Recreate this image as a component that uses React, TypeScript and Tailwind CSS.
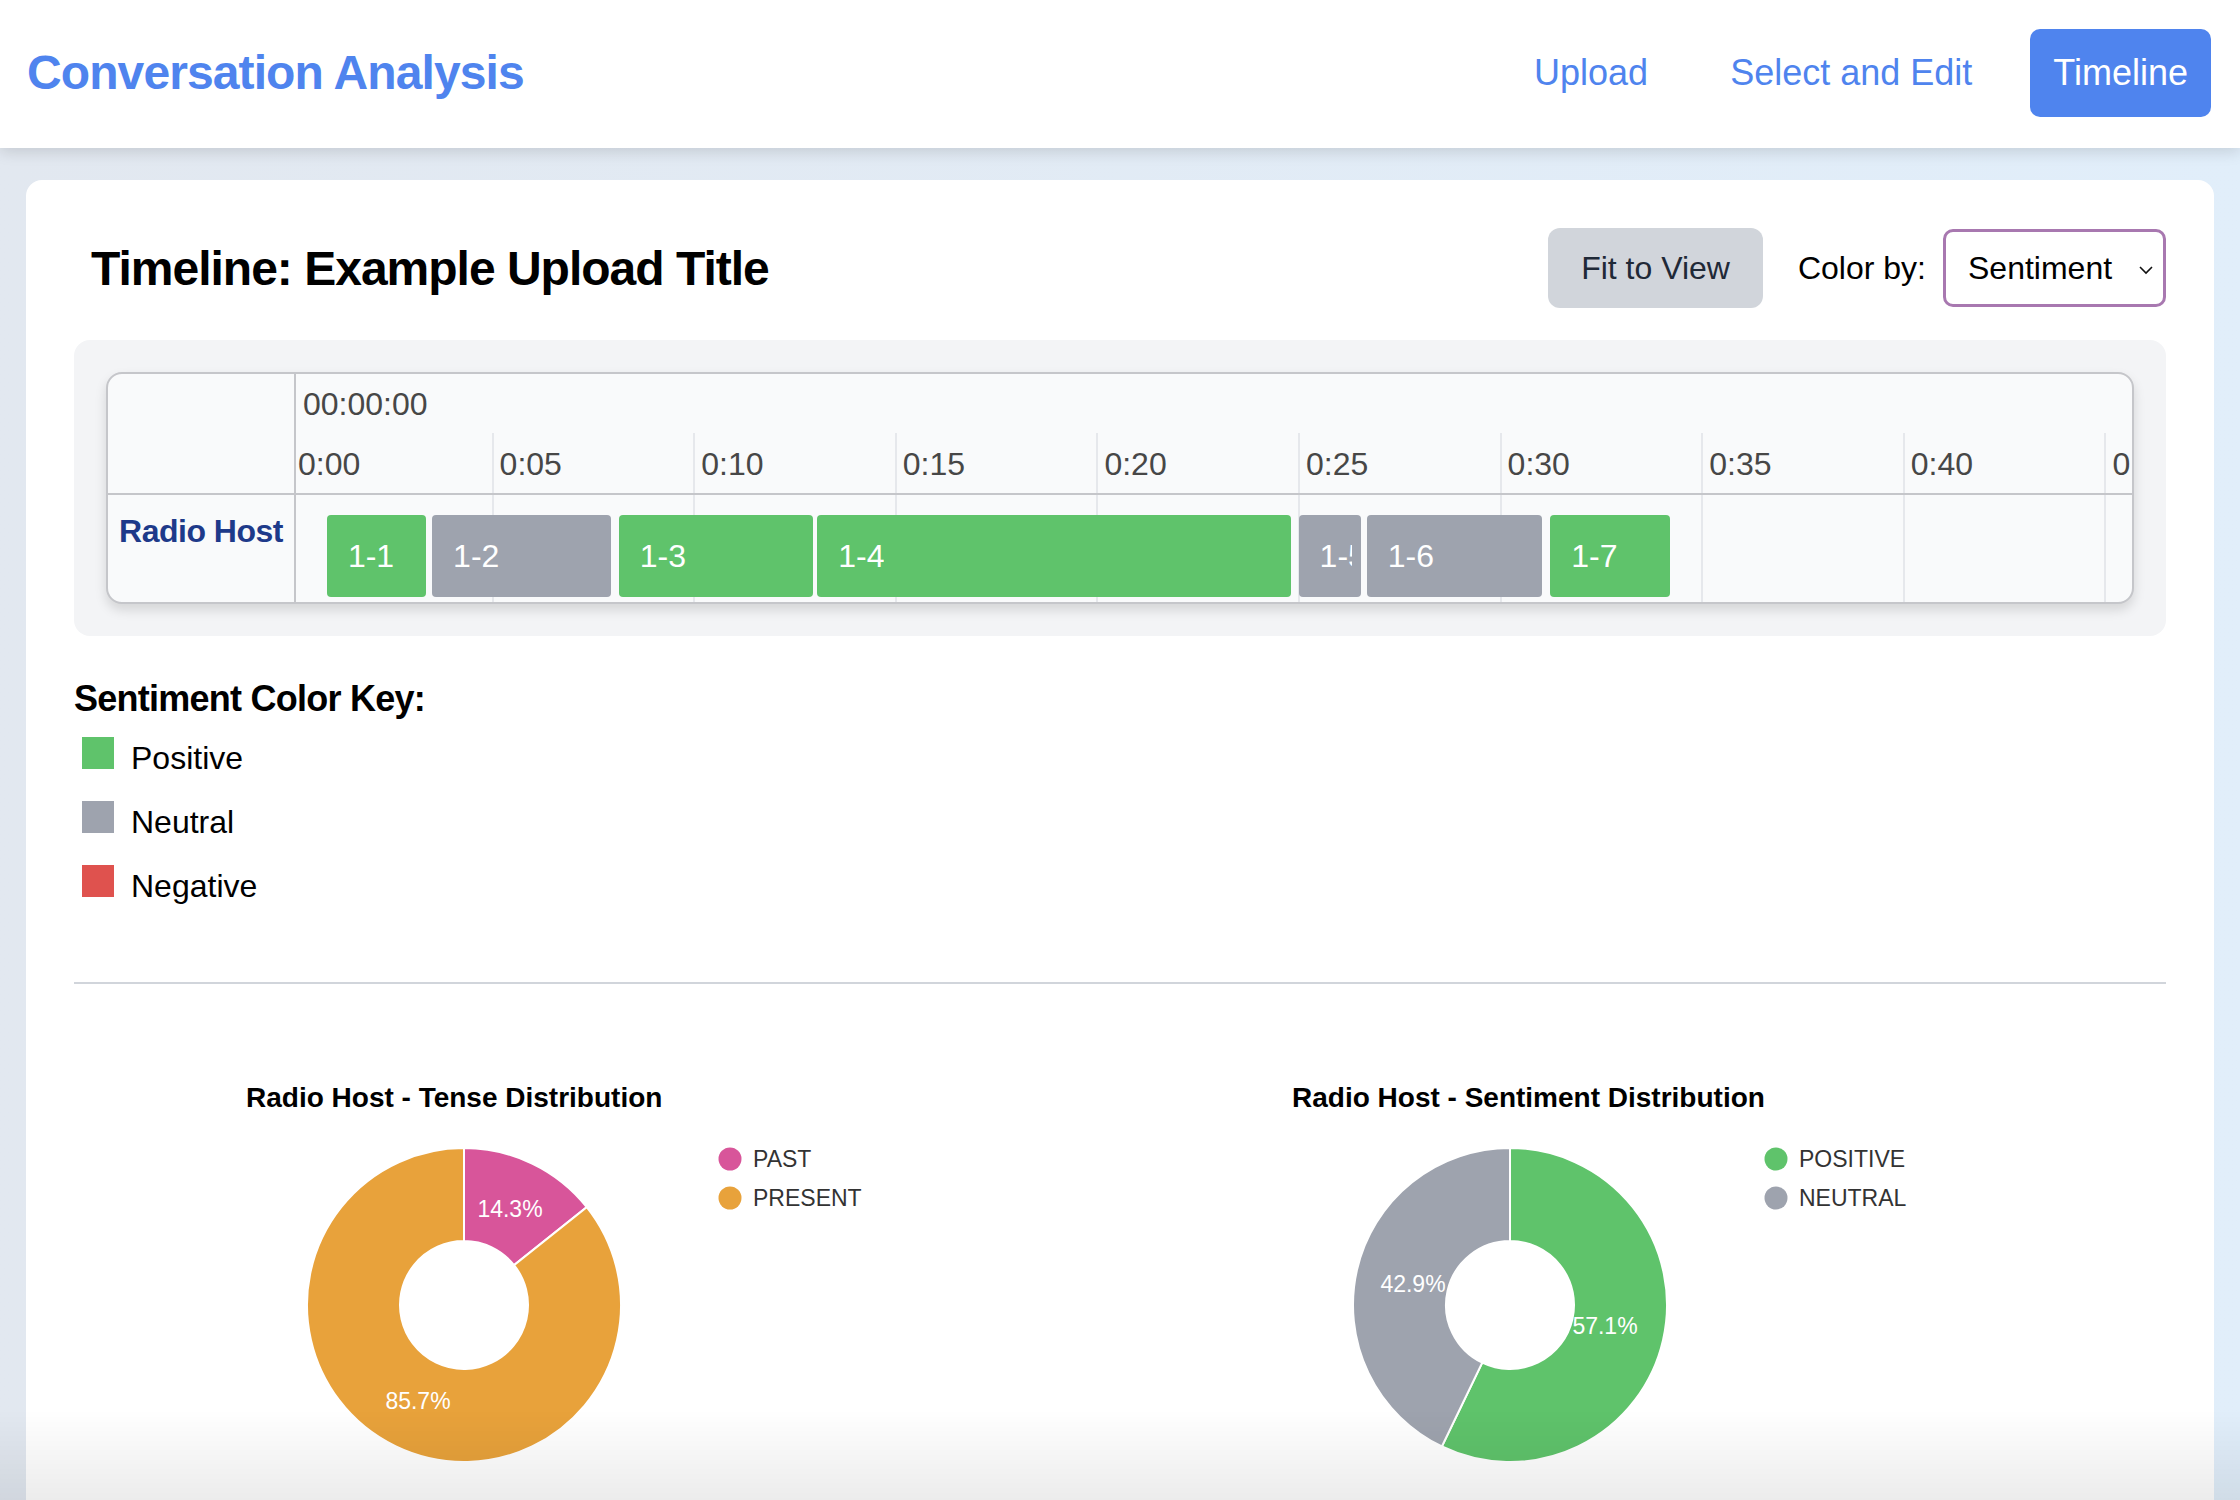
import React from 'react';

interface Segment {
    id: string;
    start: number;
    end: number;
    sentiment: 'positive' | 'neutral' | 'negative';
}

interface Slice {
    label: string;
    value: number;
    color: string;
}

interface DonutProps {
    title: string;
    slices: Slice[];
    labelPos: [number, number][];
}

const PPS = 40.32;
const ORIGIN = -5;

const segments: Segment[] = [
    {id: '1-1', start: 0.89, end: 3.35, sentiment: 'positive'},
    {id: '1-2', start: 3.5, end: 7.94, sentiment: 'neutral'},
    {id: '1-3', start: 8.13, end: 12.95, sentiment: 'positive'},
    {id: '1-4', start: 13.05, end: 24.79, sentiment: 'positive'},
    {id: '1-5', start: 24.99, end: 26.54, sentiment: 'neutral'},
    {id: '1-6', start: 26.68, end: 31.03, sentiment: 'neutral'},
    {id: '1-7', start: 31.23, end: 34.19, sentiment: 'positive'},
];

const sentimentColor: Record<string, string> = {
    positive: 'bg-[#5fc36b]',
    neutral: 'bg-[#9ea3ae]',
    negative: 'bg-[#df524e]',
};

const ticks = [0, 5, 10, 15, 20, 25, 30, 35, 40, 45];

const fmt = (s: number) => `${Math.floor(s / 60)}:${String(s % 60).padStart(2, '0')}`;

const point = (cx: number, cy: number, r: number, deg: number) => {
    const a = (deg * Math.PI) / 180;
    return [cx + r * Math.sin(a), cy - r * Math.cos(a)];
};

const arcPath = (cx: number, cy: number, r0: number, r1: number, a0: number, a1: number) => {
    const large = a1 - a0 > 180 ? 1 : 0;
    const [x0, y0] = point(cx, cy, r1, a0);
    const [x1, y1] = point(cx, cy, r1, a1);
    const [x2, y2] = point(cx, cy, r0, a1);
    const [x3, y3] = point(cx, cy, r0, a0);
    return `M${x0} ${y0} A${r1} ${r1} 0 ${large} 1 ${x1} ${y1} L${x2} ${y2} A${r0} ${r0} 0 ${large} 0 ${x3} ${y3} Z`;
};

const Donut = ({title, slices, labelPos}: DonutProps) => {
    const total = slices.reduce((sum, s) => sum + s.value, 0);
    let angle = 0;
    const cx = 218;
    const cy = 164;

    return (
        <div className="pl-[172px]">
            <h3 className="text-[28px] leading-[34px] font-bold text-black">{title}</h3>
            <svg className="mt-[26px] block" width="760" height="400" viewBox="0 0 760 400">
                {slices.map((slice, index) => {
                    const a0 = angle;
                    const a1 = angle + (slice.value / total) * 360;
                    angle = a1;
                    return (
                        <path key={index} d={arcPath(cx, cy, 64, 157, a0, a1)} fill={slice.color} stroke="#ffffff"
                              strokeWidth={2}/>
                    );
                })}
                {slices.map((slice, index) => (
                    <text key={index} x={labelPos[index][0]} y={labelPos[index][1]} textAnchor="middle" fill="#ffffff"
                          fontSize={23} fontFamily="Liberation Sans, Arial, sans-serif">
                        {((slice.value / total) * 100).toFixed(1)}%
                    </text>
                ))}
                {slices.map((slice, index) => (
                    <g key={index}>
                        <circle cx={484} cy={18 + index * 39} r={11.5} fill={slice.color}/>
                        <text x={507} y={26 + index * 39} fill="#333333" fontSize={23}
                              fontFamily="Liberation Sans, Arial, sans-serif">{slice.label}</text>
                    </g>
                ))}
            </svg>
        </div>
    );
};

const App = () => {
    return (
        <div
            className="min-h-screen bg-linear-to-r from-[#e2e8f0] to-[#e1eefa] font-['Liberation_Sans',Arial,sans-serif] text-black">
            <header
                className="relative z-10 h-[148px] bg-white shadow-[0_4px_14px_rgba(0,0,0,0.13)] flex items-center justify-between pl-[27px] pr-[29px] pb-[3px]">
                <h1 className="text-[48px] leading-[64px] font-bold tracking-[-0.9px] text-[#4f84ee]">Conversation Analysis</h1>
                <nav className="flex items-center gap-[34px]">
                    <a className="h-[88px] px-[24px] flex items-center text-[36px] text-[#4f84ee]">Upload</a>
                    <a className="h-[88px] px-[24px] flex items-center text-[36px] text-[#4f84ee]">Select and Edit</a>
                    <a className="h-[88px] px-[23px] flex items-center text-[36px] text-white bg-[#4f84ee] rounded-[10px]">Timeline</a>
                </nav>
            </header>

            <main className="px-[26px] pt-[32px]">
                <div className="bg-white rounded-[16px] p-[48px] pb-[120px]">
                    <div className="flex items-center justify-between h-[80px]">
                        <h2 className="pl-[17px] pt-[2px] text-[48px] leading-[64px] font-bold tracking-[-1px]">Timeline: Example Upload Title</h2>
                        <div className="flex items-center">
                            <button
                                className="h-[80px] px-[33px] rounded-[12px] bg-[#d1d5db] text-[32px] text-[#1f2937]">Fit to View
                            </button>
                            <span className="ml-[35px] text-[32px]">Color by:</span>
                            <div
                                className="ml-[17px] w-[223px] h-[78px] border-[3px] border-[#a878b0] rounded-[10px] flex items-center justify-between pl-[22px] pr-[10px] text-[32px]">
                                <span>Sentiment</span>
                                <svg width="14" height="9" viewBox="0 0 14 9" className="mt-[4px]">
                                    <polyline points="1,1 7,7 13,1" fill="none" stroke="#111" strokeWidth="1.6"/>
                                </svg>
                            </div>
                        </div>
                    </div>

                    <div className="mt-[32px] p-[32px] bg-[#f3f4f6] rounded-[16px]">
                        <div
                            className="flex rounded-[16px] border-2 border-[#c5c6ca] bg-[#f9fafb] shadow-[0_6px_12px_rgba(0,0,0,0.13)] overflow-hidden">
                            <div className="w-[188px] shrink-0 border-r-2 border-[#c5c6ca]">
                                <div className="h-[121px] border-b-2 border-[#c5c6ca]"/>
                                <div className="h-[107px] pt-[12px] text-center">
                                    <span className="text-[32px] leading-[48px] font-bold tracking-[-0.5px] text-[#1e3a8a]">Radio Host</span>
                                </div>
                            </div>
                            <div className="relative flex-1 overflow-hidden">
                                <div className="absolute top-[59px] bottom-0 left-0 right-0">
                                    {ticks.map((t) => (
                                        <div key={t} className="absolute top-0 bottom-0 w-[2px] bg-[#e6e8ec]"
                                             style={{left: ORIGIN + t * PPS - 1}}/>
                                    ))}
                                </div>
                                <div className="relative z-10 h-[121px] border-b-2 border-[#c5c6ca]">
                                    <div className="pt-[6px] pl-[7px] text-[32px] leading-[48px] text-[#474747]">00:00:00</div>
                                    {ticks.map((t) => (
                                        <span key={t}
                                              className="absolute top-[66px] text-[32px] leading-[48px] text-[#474747] whitespace-nowrap"
                                              style={{left: ORIGIN + t * PPS + 7}}>{fmt(t)}</span>
                                    ))}
                                </div>
                                <div className="relative h-[107px]">
                                    {segments.map((seg) => (
                                        <div key={seg.id}
                                             className={`absolute top-[20px] h-[82px] rounded-[4px] flex items-center pl-[21px] pr-[9px] ${sentimentColor[seg.sentiment]}`}
                                             style={{left: ORIGIN + seg.start * PPS, width: (seg.end - seg.start) * PPS}}>
                                            <span
                                                className="block overflow-hidden whitespace-nowrap text-[32px] leading-[48px] text-white">{seg.id}</span>
                                        </div>
                                    ))}
                                </div>
                            </div>
                        </div>
                    </div>

                    <h3 className="mt-[35px] text-[36px] leading-[56px] font-bold tracking-[-0.75px]">Sentiment Color Key:</h3>
                    <div className="mt-[7px] flex flex-col gap-[16px] pl-[8px]">
                        {[
                            {label: 'Positive', color: 'bg-[#5fc36b]'},
                            {label: 'Neutral', color: 'bg-[#9ea3ae]'},
                            {label: 'Negative', color: 'bg-[#df524e]'},
                        ].map((item) => (
                            <div key={item.label} className="flex items-start gap-[17px] h-[48px]">
                                <div className={`mt-[3px] w-[32px] h-[32px] ${item.color}`}/>
                                <span className="text-[32px] leading-[48px]">{item.label}</span>
                            </div>
                        ))}
                    </div>

                    <div className="mt-[72px] h-[2px] bg-[#d1d5db]"/>

                    <div className="mt-[97px] grid grid-cols-2">
                        <Donut
                            title="Radio Host - Tense Distribution"
                            slices={[
                                {label: 'PAST', value: 1, color: '#d8559a'},
                                {label: 'PRESENT', value: 6, color: '#e8a23b'},
                            ]}
                            labelPos={[[264, 76], [172, 268]]}
                        />
                        <Donut
                            title="Radio Host - Sentiment Distribution"
                            slices={[
                                {label: 'POSITIVE', value: 4, color: '#5fc36b'},
                                {label: 'NEUTRAL', value: 3, color: '#9ea3ae'},
                            ]}
                            labelPos={[[313, 193], [121, 151]]}
                        />
                    </div>
                </div>
            </main>

            <div
                className="pointer-events-none fixed bottom-0 left-0 right-0 h-[90px] bg-linear-to-b from-transparent to-[rgba(0,0,0,0.075)] z-20"/>
        </div>
    );
};

export default App;
